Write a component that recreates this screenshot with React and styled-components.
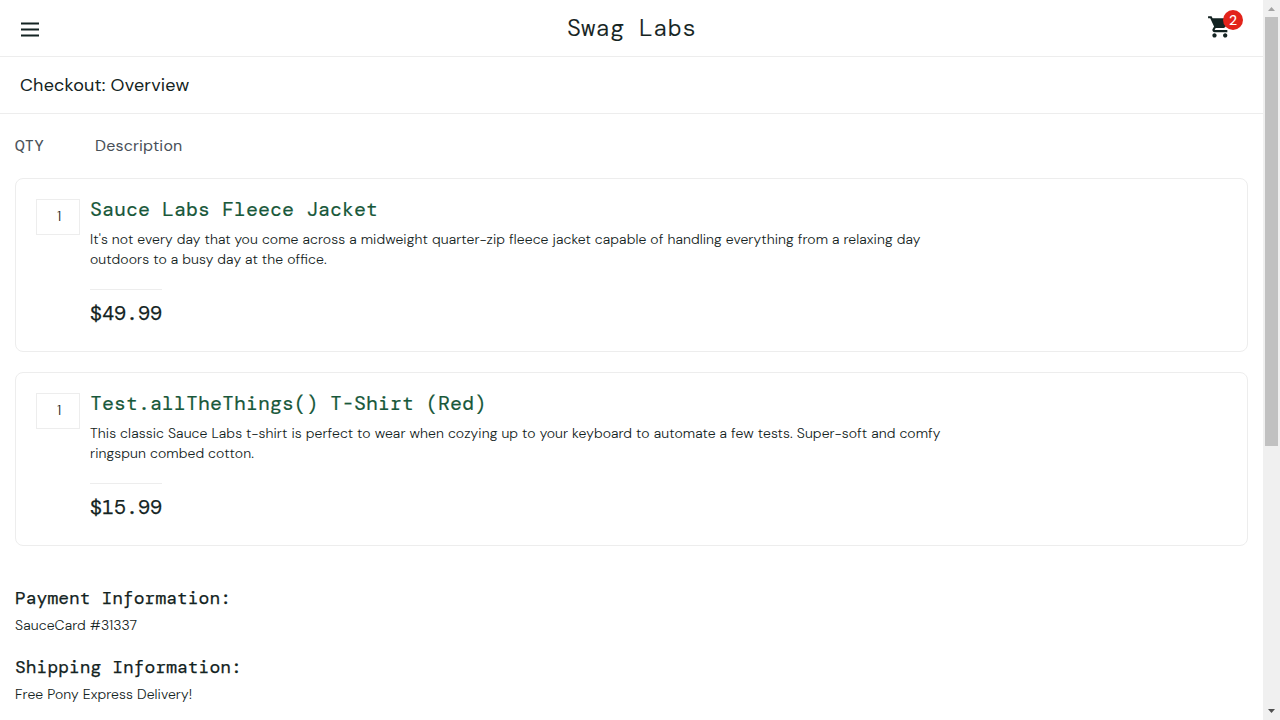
import React from "react";
import styled, { createGlobalStyle } from "styled-components";

const sans = `"DM Sans", Inter, "Liberation Sans", sans-serif`;
const mono = `"DM Mono", "Liberation Mono", monospace`;

const Global = createGlobalStyle`
  * { box-sizing: border-box; }
  body {
    margin: 0;
    background: #fff;
    color: #132322;
    font-family: ${sans};
    font-feature-settings: "liga" 1;
    overflow: hidden;
  }
`;

const Window = styled.div`
  display: flex;
  height: 720px;
  overflow: hidden;
`;
const Page = styled.main`
  flex: 1;
  min-width: 0;
`;
const Header = styled.header`
  display: grid;
  grid-template-columns: 1fr auto 1fr;
  align-items: center;
  height: 57px;
  padding: 0 20px;
  border-bottom: 1px solid #ededed;
`;
const MenuIcon = styled.svg`
  display: block;
  width: 20px;
  height: 16px;
  margin-top: 3px;
`;
const Logo = styled.div`
  font: 300 24px/32px ${mono};
  -webkit-text-stroke: 0.15px;
`;
const Cart = styled.div`
  position: relative;
  justify-self: end;
  width: 36px;
  height: 30px;
  margin-top: -3px;
`;
const CartIcon = styled.svg`
  display: block;
  width: 25.7px;
  height: 25.7px;
  margin: 2px 0 0 0;
`;
const Badge = styled.span`
  position: absolute;
  top: -2px;
  right: 0;
  width: 20px;
  height: 20px;
  border-radius: 50%;
  background: #e2231a;
  color: #fff;
  font-size: 14px;
  font-weight: 500;
  line-height: 20px;
  text-align: center;
`;
const Title = styled.div`
  height: 57px;
  padding: 0 20px;
  border-bottom: 1px solid #ededed;
  font-size: 18px;
  line-height: 56px;
  letter-spacing: 0.19px;
`;
const Content = styled.section`
  padding: 18px 15px 0;
`;
const Labels = styled.div`
  display: flex;
  height: 46px;
  color: #485058;
  font-size: 16px;
  line-height: 28px;
`;
const QtyLabel = styled.span`
  width: 80px;
  font-family: ${mono};
  -webkit-text-stroke: 0.1px;
`;
const DescriptionLabel = styled.span`
  letter-spacing: 0.17px;
`;
const Card = styled.article`
  display: flex;
  gap: 10px;
  height: 174px;
  margin-bottom: 20px;
  padding: 20px;
  border: 1px solid #ededed;
  border-radius: 8px;
`;
const Quantity = styled.div`
  width: 44px;
  height: 36px;
  padding-left: 2px;
  border: 1px solid #ededed;
  font-size: 14px;
  font-weight: 300;
  line-height: 32px;
  text-align: center;
`;
const Details = styled.div`
  display: flex;
  flex-direction: column;
  align-items: flex-start;
`;
const Name = styled.div`
  color: #18583a;
  font: 400 20px/20px ${mono};
  -webkit-text-stroke: 0.2px;
`;
const Text = styled.div`
  font-size: 14px;
  font-weight: 300;
  line-height: 20px;
  white-space: nowrap;
  letter-spacing: 0.093px;
`;
const Price = styled.div`
  margin-top: 20px;
  padding-top: 12px;
  border-top: 1px solid #ededed;
  font: 400 20px/22px ${mono};
  -webkit-text-stroke: 0.25px;
`;
const Description = styled(Text)`
  margin-top: 10px;
`;
const Info = styled.div`
  padding-top: 20px;
  height: 69px;
`;
const InfoLabel = styled.div`
  margin-bottom: 5px;
  font: 400 18px/24px ${mono};
  -webkit-text-stroke: 0.25px;
`;
const ScrollTrack = styled.div`
  display: flex;
  flex-direction: column;
  align-items: center;
  width: 17px;
  background: #f0f0f0;
`;
const ScrollArrow = styled.svg`
  display: block;
  width: 17px;
  height: 17px;
`;
const ScrollThumb = styled.div`
  width: 13px;
  height: 429px;
  margin-bottom: auto;
  background: #c1c1c1;
`;

const items = [
  { name: "Sauce Labs Fleece Jacket", price: "$49.99", lines: [
    "It's not every day that you come across a midweight quarter-zip fleece jacket capable of handling everything from a relaxing day",
    "outdoors to a busy day at the office."] },
  { name: "Test.allTheThings() T-Shirt (Red)", price: "$15.99", lines: [
    "This classic Sauce Labs t-shirt is perfect to wear when cozying up to your keyboard to automate a few tests. Super-soft and comfy",
    "ringspun combed cotton."] },
];
const infos = [
  ["Payment Information:", "SauceCard #31337"],
  ["Shipping Information:", "Free Pony Express Delivery!"],
];

export default function App() {
  return (
    <Window>
      <Global />
      <Page>
        <Header>
          <MenuIcon viewBox="0 0 20 16">
            <path d="M1 1.5h18M1 7.5h18M1 13.5h18" stroke="#132322" strokeWidth="2.2" />
          </MenuIcon>
          <Logo>Swag Labs</Logo>
          <Cart>
            <CartIcon viewBox="0 0 24 24" fill="#132322">
              <path d="M7 18c-1.1 0-1.99.9-1.99 2S5.9 22 7 22s2-.9 2-2-.9-2-2-2zM1 2v2h2l3.6 7.59-1.35 2.45c-.16.28-.25.61-.25.96 0 1.1.9 2 2 2h12v-2H7.42c-.14 0-.25-.11-.25-.25l.03-.12.9-1.63h7.45c.75 0 1.41-.41 1.75-1.03l3.58-6.49c.08-.14.12-.31.12-.48 0-.55-.45-1-1-1H5.21l-.94-2H1zm16 16c-1.1 0-1.99.9-1.99 2s.89 2 1.99 2 2-.9 2-2-.9-2-2-2z" />
            </CartIcon>
            <Badge>2</Badge>
          </Cart>
        </Header>
        <Title>Checkout: Overview</Title>
        <Content>
          <Labels>
            <QtyLabel>QTY</QtyLabel>
            <DescriptionLabel>Description</DescriptionLabel>
          </Labels>
          {items.map((item) => (
            <Card key={item.name}>
              <Quantity>1</Quantity>
              <Details>
                <Name>{item.name}</Name>
                <Description>
                  {item.lines.map((line) => <div key={line}>{line}</div>)}
                </Description>
                <Price>{item.price}</Price>
              </Details>
            </Card>
          ))}
          {infos.map(([label, value]) => (
            <Info key={label}>
              <InfoLabel>{label}</InfoLabel>
              <Text>{value}</Text>
            </Info>
          ))}
        </Content>
      </Page>
      <ScrollTrack>
        <ScrollArrow viewBox="0 0 17 17"><path d="M5 11h7L8.5 7z" fill="#a3a3a3" /></ScrollArrow>
        <ScrollThumb />
        <ScrollArrow viewBox="0 0 17 17"><path d="M5 6h7L8.5 10z" fill="#505050" /></ScrollArrow>
      </ScrollTrack>
    </Window>
  );
}
